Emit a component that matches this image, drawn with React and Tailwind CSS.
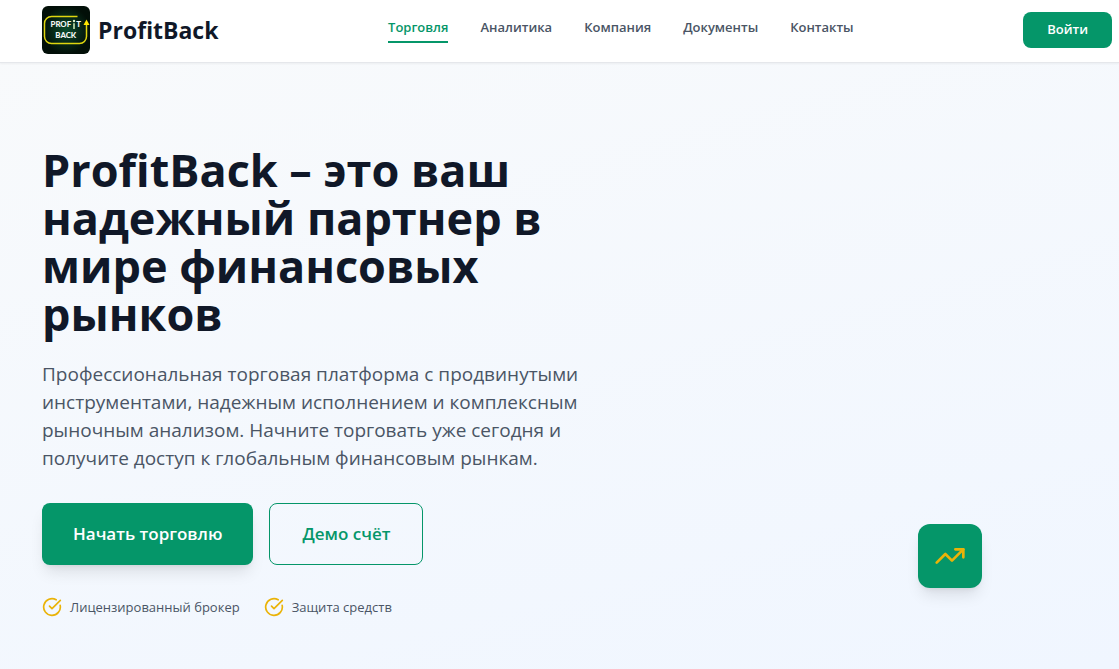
import { CircleCheckBig, TrendingUp } from "lucide-react";

const NAV_LINKS = ["Торговля", "Аналитика", "Компания", "Документы", "Контакты"];

const FEATURES = ["Лицензированный брокер", "Защита средств"];

const Logo = () => (
  <svg viewBox="0 0 48 48" className="w-12 h-12 rounded-md" aria-hidden="true">
    <defs>
      <radialGradient id="logoGlow">
        <stop offset="0" stopColor="#0b4a2c" />
        <stop offset="1" stopColor="#020f08" />
      </radialGradient>
    </defs>
    <rect width="48" height="48" fill="url(#logoGlow)" />
    <path
      d="M35.5 10.5H9.5a7 7 0 0 0-7 7v13a7 7 0 0 0 7 7h28a7 7 0 0 0 7-7V17"
      fill="none"
      stroke="#dfd60f"
      strokeWidth="1.5"
    />
    <path d="M44.5 13.5 47.5 19h-6z" fill="#ffe600" />
    <g fill="#f4f7f5" fontSize="7.8" fontWeight="900" fontFamily="Lato, sans-serif">
      <text x="8.5" y="21.2">PROF</text>
      <text x="34.2" y="21.2">T</text>
      <text x="13.3" y="31.8">BACK</text>
    </g>
    <path d="M32 17.3V23" stroke="#c9e8b5" strokeWidth="1.6" />
    <circle cx="32" cy="15" r="1.2" fill="#d9f0c8" />
  </svg>
);

const Header = () => (
  <header className="relative flex items-center justify-between bg-white border-b border-gray-200 shadow-xs pl-[42px] pr-[7px] pt-1.5 pb-2">
    <a href="#" className="flex items-center gap-2">
      <Logo />
      <span className="text-[23px] leading-8 font-bold text-gray-900">ProfitBack</span>
    </a>
    <nav className="flex items-center gap-8">
      {NAV_LINKS.map((label, index) => (
        <a
          key={label}
          href="#"
          className={`pb-1 border-b-2 text-[13px] leading-5 font-semibold ${
            index === 0
              ? "text-[#059669] border-[#059669]"
              : "text-gray-600 border-transparent"
          }`}
        >
          {label}
        </a>
      ))}
    </nav>
    <button
      type="button"
      className="h-9 px-6 rounded-lg bg-[#059669] text-[13px] font-semibold text-white"
    >
      Войти
    </button>
  </header>
);

const Hero = () => (
  <section className="flex-1 grid grid-cols-2 items-start gap-6 px-[42px] pt-[83px] pb-13 bg-linear-165 from-slate-50 to-[#f0f6ff]">
    <div>
      <h1 className="text-[45px] leading-12 font-bold text-gray-900">
        ProfitBack – это ваш надежный партнер в мире финансовых рынков
      </h1>
      <p className="mt-[22px] w-[540px] text-[19px] leading-7 text-gray-600">
        Профессиональная торговая платформа с продвинутыми инструментами, надежным
        исполнением и комплексным рыночным анализом. Начните торговать уже сегодня и
        получите доступ к глобальным финансовым рынкам.
      </p>
      <div className="flex gap-4 mt-[31px]">
        <button
          type="button"
          className="px-[31px] py-4 rounded-lg bg-[#059669] text-[17px] leading-[30px] font-semibold text-white shadow-lg"
        >
          Начать торговлю
        </button>
        <button
          type="button"
          className="px-8 py-4 rounded-lg border border-[#059669] text-[17px] leading-7 font-semibold text-[#059669]"
        >
          Демо счёт
        </button>
      </div>
      <ul className="flex gap-6 mt-8">
        {FEATURES.map((label) => (
          <li key={label} className="flex items-center gap-2 text-[13px] leading-5 text-gray-600">
            <CircleCheckBig size={20} className="text-[#eab308]" />
            {label}
          </li>
        ))}
      </ul>
    </div>

    {/* Chart badge */}
    <div className="self-end justify-self-end flex items-center justify-center w-16 h-16 mr-[95px] mb-[29px] rounded-xl bg-[#059669] shadow-lg">
      <TrendingUp size={32} className="text-[#eab308]" />
    </div>
  </section>
);

const App = () => (
  <div className="min-h-screen flex flex-col font-['Open_Sans','Noto_Sans',sans-serif]">
    <Header />
    <Hero />
  </div>
);

export default App;
